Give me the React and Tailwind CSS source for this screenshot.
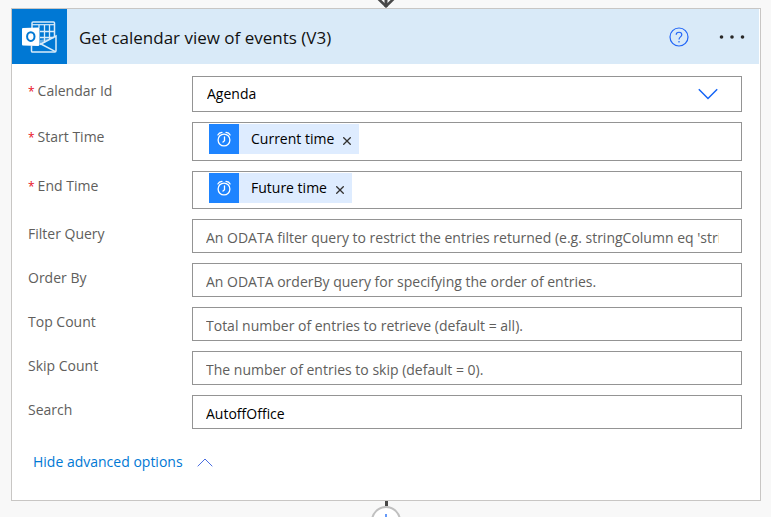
import React from 'react';

const fieldBox = 'w-full min-w-0 border border-[#949494] bg-white';

function OutlookIcon() {
  return (
    <svg viewBox="0 0 36 34" className="h-[34px] w-9" fill="none" aria-hidden="true">
      <path d="M10 8V3Q10 2 11 2H31.500Q32.500 2 32.500 3V16" stroke="#d9ebf9" strokeWidth="1.500" />
      <path d="M10 4.700H32" stroke="#d9ebf9" strokeWidth="1.200" />
      <path d="M18 11.500H32M18 17.500H32M17 5V8M22.500 5V23M27.500 5V20" stroke="#d9ebf9" strokeWidth="1.300" />
      <path d="M18 24.500L34 16V30.800Q34 32 32.800 32H10Q9.500 32 9.500 31V25.500" stroke="#d9ebf9" strokeWidth="1.500" />
      <path d="M18 23.500L33.500 31.700" stroke="#d9ebf9" strokeWidth="1.500" />
      <path d="M18 20L29 18.500L18 24.500Z" fill="#d9ebf9" fillOpacity="0.450" />
      <path d="M1 8L16.500 7.500L17.500 8.500V25L16.500 26L1 25.500Q0 25.500 0 24.500V9Q0 8 1 8Z" fill="#fff" />
      <ellipse cx="8.800" cy="16.600" rx="3.700" ry="4.400" stroke="#0078d4" strokeWidth="2" />
    </svg>
  );
}

function ClockIcon() {
  return (
    <svg viewBox="0 0 16 16" className="size-4" fill="none" stroke="#fff" strokeWidth="1.300" strokeLinecap="round" aria-hidden="true">
      <circle cx="8" cy="9" r="5.900" />
      <path d="M8.500 5.800V9.800L7 11" />
      <path d="M1.900 3.900Q3 1.500 6 1.300M14.100 3.900Q13 1.500 10 1.300" />
    </svg>
  );
}

function Row({ id, label, required, children }) {
  return (
    <div className="flex items-start">
      <label htmlFor={id} className="w-[164px] shrink-0 pt-1 text-sm leading-[22px] text-[#605e5c]">
        {required && <span className="mr-[3px] text-xs leading-none text-[#e81123]">*</span>}
        {label}
      </label>
      <div className="min-w-0 flex-1">{children}</div>
    </div>
  );
}

function TokenField({ id, token, height = 'h-[38px]' }) {
  return (
    <div className={`${fieldBox} ${height} flex items-start pl-4 pt-px`}>
      <span className="flex h-[30px] shrink-0 items-center bg-[#deecff] text-sm text-black">
        <span className="flex size-[30px] items-center justify-center bg-[#1e84ff]">
          <ClockIcon />
        </span>
        <span className="pl-3">{token}</span>
        <button type="button" aria-label={`Remove ${token}`} className="flex h-full items-center pl-[9px] pr-2 pt-1">
          <svg viewBox="0 0 8 8" className="size-2" stroke="#323130" strokeWidth="1.300" aria-hidden="true">
            <path d="M.3 .3L7.700 7.700M7.700 .3L.3 7.700" />
          </svg>
        </button>
      </span>
      <input id={id} className="h-[30px] min-w-0 flex-1 text-sm outline-none" />
    </div>
  );
}

function TextField({ id, placeholder, value }) {
  return (
    <input
      id={id}
      type="text"
      placeholder={placeholder}
      defaultValue={value}
      className={`${fieldBox} block h-[34px] pl-[13px] pr-[22px] pt-0.5 text-sm text-black outline-none placeholder:text-[#605e5c]`}
    />
  );
}

export default function App() {
  return (
    <main className="flex h-screen flex-col overflow-hidden bg-[#f8f8f8] pl-[11px] pr-[10px] font-['Open_Sans','Noto_Sans',sans-serif]">
      <svg viewBox="0 0 18 8" className="h-2 w-[18px] shrink-0 self-center" fill="none" stroke="#484848" aria-hidden="true">
        <path d="M9 0V7" strokeWidth="3" />
        <path d="M1.500 -1L9 6.300L16.500 -1" strokeWidth="2.600" />
      </svg>

      <section className="shrink-0 border border-[#c8c6c4] bg-white">
        <header className="mr-px flex h-[55px] items-center bg-[#d9eaf8]">
          <div className="flex size-[55px] shrink-0 items-center justify-center bg-[#0078d4]">
            <OutlookIcon />
          </div>
          <h1 className="flex-1 truncate pl-3 pt-0.5 text-[17px] leading-6 text-[#111]">Get calendar view of events (V3)</h1>
          <button type="button" aria-label="Help" className="mr-[29px]">
            <svg viewBox="0 0 20 20" className="size-5" fill="none" stroke="#2266f7" strokeWidth="1.200" aria-hidden="true">
              <circle cx="10" cy="10" r="9" />
              <path d="M7.200 7.700C7.200 4.400 12.800 4.400 12.800 7.700C12.800 10 10 9.800 10 12.500M10 14V15.500" />
            </svg>
          </button>
          <button type="button" aria-label="More commands" className="mr-[13px]">
            <svg viewBox="0 0 28 6" className="h-[6px] w-7" fill="#292827" aria-hidden="true">
              <circle cx="3.500" cy="3" r="1.800" />
              <circle cx="14" cy="3" r="1.800" />
              <circle cx="24.500" cy="3" r="1.800" />
            </svg>
          </button>
        </header>

        <form className="flex flex-col gap-[10px] pb-[27px] pl-4 pr-[18px] pt-3">
          <Row id="calendar" label="Calendar Id" required>
            <div className="grid items-center">
              <select id="calendar" className={`${fieldBox} col-start-1 row-start-1 h-9 appearance-none px-[14px] text-sm text-black outline-none`}>
                <option>Agenda</option>
              </select>
              <svg viewBox="0 0 20 12" className="pointer-events-none col-start-1 row-start-1 mr-6 h-3 w-5 justify-self-end" fill="none" stroke="#1464f6" strokeWidth="1.500" aria-hidden="true">
                <path d="M.8 1.300L10 10.500L19.200 1.300" />
              </svg>
            </div>
          </Row>
          <Row id="start" label="Start Time" required>
            <TokenField id="start" token="Current time" height="h-[39px]" />
          </Row>
          <Row id="end" label="End Time" required>
            <TokenField id="end" token="Future time" />
          </Row>
          <Row id="filter" label="Filter Query">
            <TextField id="filter" placeholder="An ODATA filter query to restrict the entries returned (e.g. stringColumn eq 'stringValue')" />
          </Row>
          <Row id="order" label="Order By">
            <TextField id="order" placeholder="An ODATA orderBy query for specifying the order of entries." />
          </Row>
          <Row id="top" label="Top Count">
            <TextField id="top" placeholder="Total number of entries to retrieve (default = all)." />
          </Row>
          <Row id="skip" label="Skip Count">
            <TextField id="skip" placeholder="The number of entries to skip (default = 0)." />
          </Row>
          <Row id="search" label="Search">
            <TextField id="search" value="AutoffOffice" />
          </Row>
          <button type="button" className="ml-[5px] mt-3 flex h-[22px] items-center gap-[14px] self-start text-sm text-[#0078d4]">
            Hide advanced options
            <svg viewBox="0 0 16 9" className="h-[9px] w-4" fill="none" stroke="#4a6ee0" aria-hidden="true">
              <path d="M.7 8.300L8 1L15.300 8.300" />
            </svg>
          </button>
        </form>
      </section>

      <div className="flex shrink-0 flex-col items-center">
        <div className="h-[5px] w-[3px] bg-[#484848]" />
        <button type="button" aria-label="Insert a new step" className="flex size-[30px] items-center justify-center rounded-full border-2 border-[#c0c0c0] bg-white">
          <svg viewBox="0 0 14 14" className="size-[14px]" stroke="#1464f6" strokeWidth="1.300" aria-hidden="true">
            <path d="M7 0V14M0 7H14" />
          </svg>
        </button>
      </div>
    </main>
  );
}
